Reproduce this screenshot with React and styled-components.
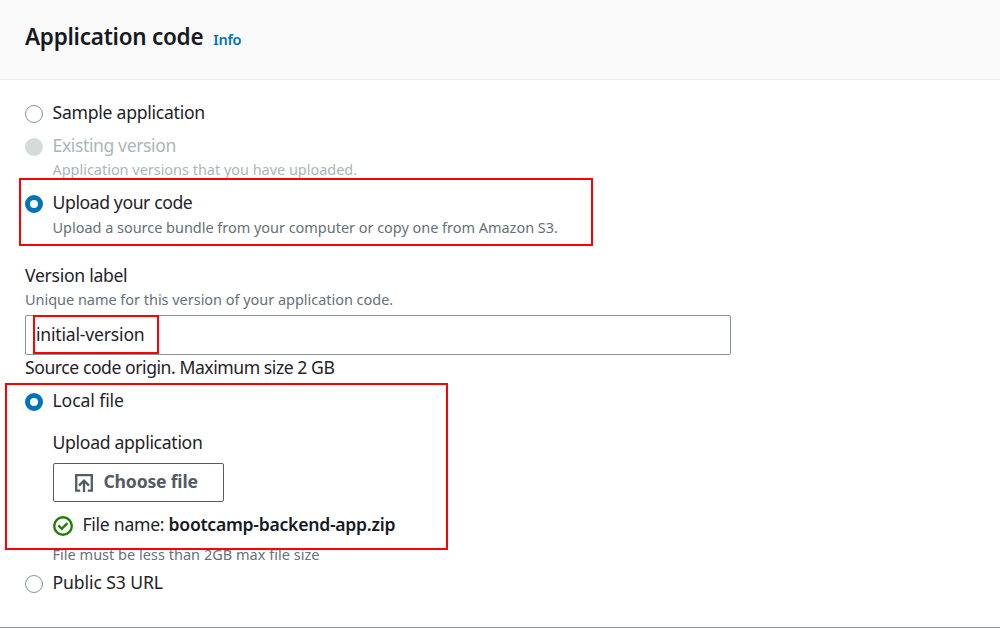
import React from "react";
import styled, { createGlobalStyle } from "styled-components";

const GlobalStyle = createGlobalStyle`
  * { box-sizing: border-box; }
  body {
    margin: 0;
    background: #fff;
    color: #1f2228;
    font-family: "Noto Sans", "Open Sans", sans-serif;
    font-size: 17.6px;
    line-height: 25px;
  }
`;

const Panel = styled.section`
  position: relative;
  height: 628px;
  overflow: hidden;
  border-bottom: 1px solid #879596;
`;
const Header = styled.header`
  display: flex;
  align-items: baseline;
  gap: 10px;
  height: 80px;
  padding: 21px 25px 0;
  background: #fafafa;
  border-bottom: 1px solid #eaeded;
`;
const Title = styled.h2`
  margin: 0;
  color: #16191f;
  font-size: 22.5px;
  line-height: 32px;
  font-weight: 600;
  letter-spacing: -0.26px;
`;
const InfoLink = styled.a`
  color: #0073bb;
  font-size: 14.5px;
  font-weight: 600;
  letter-spacing: -0.25px;
`;
const Body = styled.div`
  display: flex;
  flex-direction: column;
  padding: 20px 25px 0;
`;
const Text = styled.span`
  white-space: nowrap;
  letter-spacing: ${(p) => p.$track || 0}px;
`;
const Option = styled.label`
  display: flex;
  align-items: center;
  gap: 9.5px;
  height: 25px;
  margin-top: ${(p) => p.$top || 0}px;
  color: ${(p) => (p.$disabled ? "#aab7b8" : "inherit")};
`;
const Radio = styled.span`
  width: 18px;
  height: 18px;
  margin-top: 2px;
  border-radius: 50%;
  background: ${(p) => (p.$state === "disabled" ? "#d5dbdb" : "#fff")};
  border: ${(p) =>
    p.$state === "on" ? "5px solid #0073bb" : p.$state === "disabled" ? "0" : "1px solid #879596"};
`;
const Hint = styled.div`
  height: 22px;
  line-height: 22px;
  margin-top: ${(p) => p.$top || 0}px;
  margin-left: ${(p) => (p.$indent ? 27.5 : 0)}px;
  font-size: 14.5px;
  white-space: nowrap;
  color: ${(p) => (p.$disabled ? "#aab7b8" : "#687078")};
  letter-spacing: ${(p) => p.$track ?? -0.03}px;
`;
const Label = styled.div`
  height: 25px;
  margin-top: ${(p) => p.$top || 0}px;
  white-space: nowrap;
  letter-spacing: ${(p) => p.$track || 0}px;
`;
const Field = styled.div`
  display: flex;
  align-items: center;
  width: 706px;
  height: 40px;
  margin-top: 5px;
  padding: 0 10px 1px;
  border: 1px solid #879596;
  border-radius: 2px;
`;
const Upload = styled.div`
  display: flex;
  flex-direction: column;
  align-items: flex-start;
  margin: 17px 0 0 27.5px;
`;
const Button = styled.button`
  display: flex;
  align-items: center;
  gap: 11px;
  width: 171px;
  height: 39px;
  margin-top: 8px;
  padding: 0 21px;
  border: 1px solid #545b64;
  border-radius: 2px;
  background: #fff;
  color: #545b64;
  font: 700 17.6px/25px "Noto Sans", sans-serif;
`;
const ButtonText = styled(Text)`
  padding-bottom: 2px;
`;
const FileLine = styled.div`
  display: flex;
  align-items: center;
  gap: 10px;
  height: 25px;
  margin-top: 10px;
`;
const FileName = styled.b`
  color: #16191f;
  font-weight: 600;
  letter-spacing: -0.26px;
`;
const Highlight = styled.div`
  position: absolute;
  left: ${(p) => p.$x}px;
  top: ${(p) => p.$y}px;
  width: ${(p) => p.$w}px;
  height: ${(p) => p.$h}px;
  border: 2px solid #f00;
  pointer-events: none;
`;

const UploadIcon = () => (
  <svg width="18" height="18" viewBox="0 0 18 18" fill="none" stroke="currentColor" strokeWidth="2.3">
    <path d="M5.2 16.6H1.2V1.2h15.6v15.4h-4" />
    <path d="M9 18V7M4 11.6l5-5 5 5" />
  </svg>
);
const CheckMark = styled.svg`
  margin-top: 2px;
`;
const CheckIcon = () => (
  <CheckMark width="20" height="20" viewBox="0 0 20 20" fill="none" stroke="#1d8102" strokeWidth="2.4">
    <circle cx="10" cy="10" r="8.8" />
    <path d="M5.4 9.4l3.4 3.4 5.6-5.6" />
  </CheckMark>
);

export default function App() {
  return (
    <Panel>
      <GlobalStyle />
      <Header>
        <Title>Application code</Title>
        <InfoLink>Info</InfoLink>
      </Header>
      <Body>
        <Option>
          <Radio />
          <Text $track={-0.26}>Sample application</Text>
        </Option>
        <Option $top={8} $disabled>
          <Radio $state="disabled" />
          <Text $track={-0.4}>Existing version</Text>
        </Option>
        <Hint $indent $disabled>Application versions that you have uploaded.</Hint>
        <Option $top={10}>
          <Radio $state="on" />
          <Text $track={-0.4}>Upload your code</Text>
        </Option>
        <Hint $indent $top={1}>Upload a source bundle from your computer or copy one from Amazon S3.</Hint>
        <Label $top={25} $track={-0.29}>Version label</Label>
        <Hint>Unique name for this version of your application code.</Hint>
        <Field>
          <Text $track={-0.2}>initial-version</Text>
        </Field>
        <Label $track={-0.45}>Source code origin. Maximum size 2 GB</Label>
        <Option $top={8}>
          <Radio $state="on" />
          <Text $track={-0.1}>Local file</Text>
        </Option>
        <Upload>
          <Label $track={-0.3}>Upload application</Label>
          <Button>
            <UploadIcon />
            <ButtonText $track={-0.2}>Choose file</ButtonText>
          </Button>
          <FileLine>
            <CheckIcon />
            <Text $track={-0.28}>
              File name: <FileName>bootcamp-backend-app.zip</FileName>
            </Text>
          </FileLine>
        </Upload>
        <Hint $indent $top={6} $track={0.02}>File must be less than 2GB max file size</Hint>
        <Option $top={5}>
          <Radio />
          <Text $track={-0.1}>Public S3 URL</Text>
        </Option>
      </Body>
      <Highlight $x={19} $y={178} $w={574} $h={68} />
      <Highlight $x={33} $y={315} $w={126} $h={39} />
      <Highlight $x={5} $y={383} $w={443} $h={167} />
    </Panel>
  );
}
